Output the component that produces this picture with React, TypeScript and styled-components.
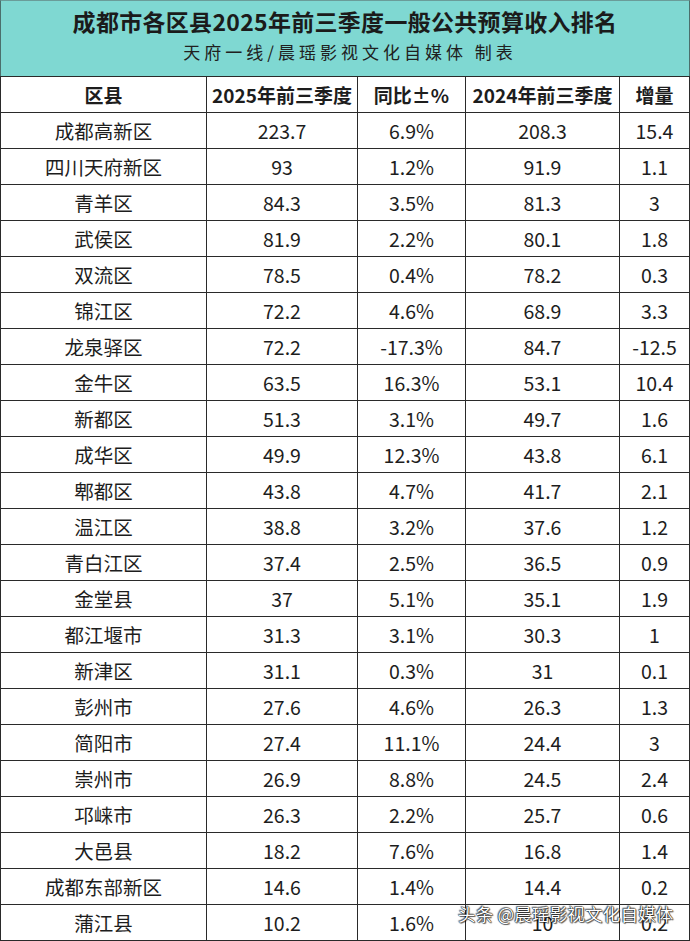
import React from "react";
import styled, { createGlobalStyle } from "styled-components";

const Global = createGlobalStyle`
  html, body { margin: 0; padding: 0; background: #ffffff; }
  body { font-family: "Noto Sans CJK SC", "Noto Sans", sans-serif; color: #1e1e1e; }
`;

const Page = styled.div`
  position: relative;
  width: 690px;
  height: 941px;
  overflow: hidden;
  background: #fff;
`;

const Header = styled.header`
  box-sizing: border-box;
  height: 76px;
  background: #7fd8d2;
  border-top: 1px solid #6a9c99;
  border-left: 1px solid #4b6f6c;
  border-right: 1px solid #4b6f6c;
  display: flex;
  flex-direction: column;
  align-items: center;
  padding-top: 4px;
`;

const Title = styled.h1`
  margin: 0;
  font-size: 23px;
  line-height: 32px;
  font-weight: 700;
  color: #1b1b1b;
  letter-spacing: 0.3px;
`;

const Subtitle = styled.div`
  margin-top: 1px;
  font-family: "Noto Sans CJK SC", serif;
  font-size: 17px;
  line-height: 28px;
  letter-spacing: 4px;
  font-weight: 400;
  color: #202020;
  padding-left: 10px;
`;

const Table = styled.div`
  display: grid;
  grid-template-columns: 206px 151px 108px 154px 70px;
  border-top: 1px solid #2a2a2a;
  border-left: 1px solid #2a2a2a;
`;

const Cell = styled.div<{ $head?: boolean }>`
  box-sizing: border-box;
  height: 36px;
  border-right: 1px solid #2a2a2a;
  border-bottom: 1px solid #2a2a2a;
  display: flex;
  align-items: center;
  justify-content: center;
  font-size: ${(p) => (p.$head ? "19px" : "19.5px")};
  font-weight: ${(p) => (p.$head ? 700 : 400)};
  color: #1d1d1d;
  white-space: nowrap;
`;

const Watermark = styled.div`
  position: absolute;
  left: 458px;
  top: 901px;
  font-size: 17.5px;
  line-height: 26px;
  color: #ffffff;
  letter-spacing: 0.2px;
  text-shadow: 0 0 1px #000, 0 0 1px #000, 1px 1px 1px rgba(0,0,0,0.6), -1px -1px 1px rgba(0,0,0,0.5);
`;

const headers = ["区县", "2025年前三季度", "同比±%", "2024年前三季度", "增量"];

const rows: string[][] = [
  ["成都高新区", "223.7", "6.9%", "208.3", "15.4"],
  ["四川天府新区", "93", "1.2%", "91.9", "1.1"],
  ["青羊区", "84.3", "3.5%", "81.3", "3"],
  ["武侯区", "81.9", "2.2%", "80.1", "1.8"],
  ["双流区", "78.5", "0.4%", "78.2", "0.3"],
  ["锦江区", "72.2", "4.6%", "68.9", "3.3"],
  ["龙泉驿区", "72.2", "-17.3%", "84.7", "-12.5"],
  ["金牛区", "63.5", "16.3%", "53.1", "10.4"],
  ["新都区", "51.3", "3.1%", "49.7", "1.6"],
  ["成华区", "49.9", "12.3%", "43.8", "6.1"],
  ["郫都区", "43.8", "4.7%", "41.7", "2.1"],
  ["温江区", "38.8", "3.2%", "37.6", "1.2"],
  ["青白江区", "37.4", "2.5%", "36.5", "0.9"],
  ["金堂县", "37", "5.1%", "35.1", "1.9"],
  ["都江堰市", "31.3", "3.1%", "30.3", "1"],
  ["新津区", "31.1", "0.3%", "31", "0.1"],
  ["彭州市", "27.6", "4.6%", "26.3", "1.3"],
  ["简阳市", "27.4", "11.1%", "24.4", "3"],
  ["崇州市", "26.9", "8.8%", "24.5", "2.4"],
  ["邛崃市", "26.3", "2.2%", "25.7", "0.6"],
  ["大邑县", "18.2", "7.6%", "16.8", "1.4"],
  ["成都东部新区", "14.6", "1.4%", "14.4", "0.2"],
  ["蒲江县", "10.2", "1.6%", "10", "0.2"],
];

export default function App() {
  return (
    <Page>
      <Global />
      <Header>
        <Title>成都市各区县2025年前三季度一般公共预算收入排名</Title>
        <Subtitle>天府一线/晨瑶影视文化自媒体 制表</Subtitle>
      </Header>
      <Table>
        {headers.map((h) => (
          <Cell key={h} $head>
            {h}
          </Cell>
        ))}
        {rows.map((r, i) =>
          r.map((v, j) => <Cell key={`${i}-${j}`}>{v}</Cell>)
        )}
      </Table>
      <Watermark>头条 @晨瑶影视文化自媒体</Watermark>
    </Page>
  );
}
